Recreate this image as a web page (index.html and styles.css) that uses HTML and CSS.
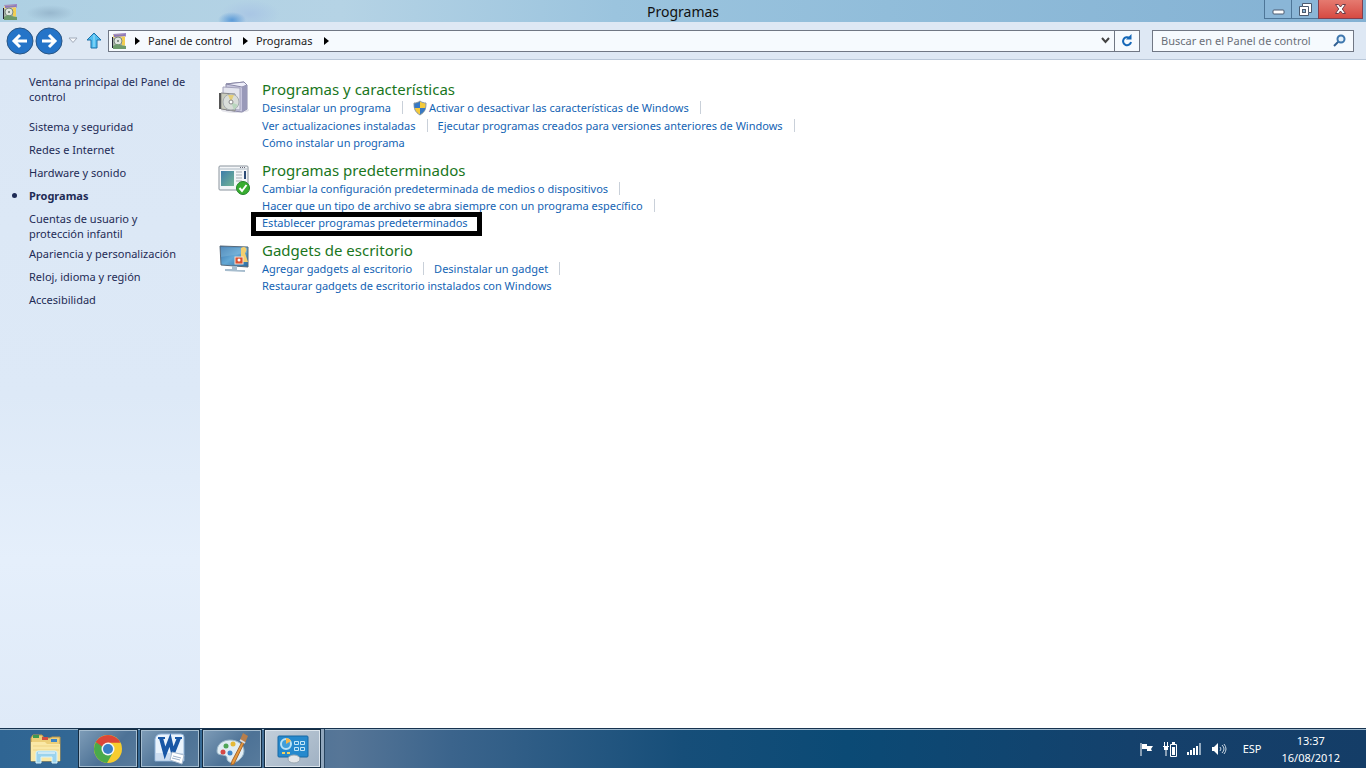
FILE: index.html
```html
<!DOCTYPE html>
<html lang="es">
<head>
  <meta charset="UTF-8" />
  <meta name="viewport" content="width=device-width, initial-scale=1.0" />
  <title>Programas</title>
  <link rel="stylesheet" href="styles.css">
</head>
<body>

  <!-- shared icon, used in the title bar and the address bar -->
  <svg class="defs" width="0" height="0" aria-hidden="true">
    <symbol id="icon-programs" viewBox="0 0 16 16">
      <path d="M1 4v11h1V4z" fill="#223"/>
      <path d="M2 1l13-1v3l-1 1v12l-3 0z" fill="#9b86c4"/>
      <path d="M2 2l12-1v12l-2 2H2z" fill="#e9d58a"/>
      <path d="M3 2l11-1v2L3 4z" fill="#8d79ba"/>
      <path d="M11 4h3v8h-3z" fill="#f2cf52"/>
      <path d="M2 5h9v10H2z" fill="#a8b5a6"/>
      <circle cx="7" cy="8" r="4" fill="#dfe5df" stroke="#7c8b81"/>
      <circle cx="7" cy="8" r="1" fill="#66736c"/>
      <path d="M2 13l4-2 3 1 6 1v3H2z" fill="#6d9a6c"/>
    </symbol>
  </svg>

  <header class="titlebar">
    <svg class="title-icon" width="16" height="16"><use href="#icon-programs"/></svg>
    <h1>Programas</h1>
    <div class="window-buttons">
      <button class="win-btn" aria-label="Minimizar">
        <svg width="13" height="12"><rect x="1" y="7" width="11" height="4" rx="1" fill="#fff" stroke="#4c5b70"/></svg>
      </button>
      <button class="win-btn" aria-label="Restaurar">
        <svg width="13" height="13"><path d="M3.500.5h9v9h-3v3h-9v-9h3z" fill="#fff" stroke="#4c5b70"/><path d="M3.500 3.500h6v6" fill="none" stroke="#4c5b70"/><rect x="3.500" y="6.500" width="3" height="3" fill="#8eb7d6" stroke="#4c5b70"/></svg>
      </button>
      <button class="win-btn close" aria-label="Cerrar">
        <svg width="13" height="12" viewBox="0 0 13 12"><path d="M1.500 1.500h3L6.500 4l2-2.500h3L8.300 6l3.200 4.500h-3L6.500 8l-2 2.500h-3L4.700 6z" fill="#fff" stroke="#6b3c48"/></svg>
      </button>
    </div>
  </header>

  <nav class="toolbar">
    <button class="round" aria-label="Atrás">
      <svg width="28" height="28"><circle cx="14" cy="14" r="13" fill="#2574c8" stroke="#285584"/><path d="M21 14H8M14 8l-6 6 6 6" fill="none" stroke="#fff" stroke-width="3"/></svg>
    </button>
    <button class="round" aria-label="Adelante">
      <svg width="28" height="28"><circle cx="14" cy="14" r="13" fill="#2574c8" stroke="#285584"/><path d="M7 14h13M14 8l6 6-6 6" fill="none" stroke="#fff" stroke-width="3"/></svg>
    </button>
    <button class="recent" aria-label="Páginas recientes">
      <svg width="10" height="7"><path d="M1 1h8L5 5.500z" fill="#f6f9fd" stroke="#a3acba"/></svg>
    </button>
    <button class="up" aria-label="Subir">
      <svg width="16" height="17"><path d="M8 1l7 7h-4v8H5V8H1z" fill="#4fbdf0" stroke="#1d71a9"/><path d="M8 3v12" stroke="#a5e2fb"/></svg>
    </button>
    <div class="address">
      <svg width="16" height="16"><use href="#icon-programs"/></svg>
      <svg class="crumb-arrow" width="5" height="8"><path d="M0 0l5 4-5 4z"/></svg>
      <a href="#">Panel de control</a>
      <svg class="crumb-arrow" width="5" height="8"><path d="M0 0l5 4-5 4z"/></svg>
      <a href="#">Programas</a>
      <svg class="crumb-arrow" width="5" height="8"><path d="M0 0l5 4-5 4z"/></svg>
      <button class="history" aria-label="Ubicaciones anteriores">
        <svg width="9" height="7"><path d="M1 1l3.500 4L8 1" fill="none" stroke="#444" stroke-width="2"/></svg>
      </button>
      <button class="refresh" aria-label="Actualizar">
        <svg width="12" height="13"><path d="M8.500 4A4 4 0 1 0 10 8" fill="none" stroke="#1668b8" stroke-width="2"/><path d="M10.500 0v5.500H5z" fill="#1668b8"/></svg>
      </button>
    </div>
    <div class="search">
      <input type="text" placeholder="Buscar en el Panel de control" aria-label="Buscar en el Panel de control">
      <svg width="13" height="13"><path d="M6 7l-5 5" stroke="#315f92" stroke-width="2"/><circle cx="8" cy="5" r="3.500" fill="#e3f0fa" stroke="#3e77ae" stroke-width="2"/></svg>
    </div>
  </nav>

  <div class="container">
    <aside class="sidebar">
      <a class="home" href="#">Ventana principal del Panel de control</a>
      <ul>
        <li><a href="#">Sistema y seguridad</a></li>
        <li><a href="#">Redes e Internet</a></li>
        <li><a href="#">Hardware y sonido</a></li>
        <li class="current"><a href="#">Programas</a></li>
        <li class="two-lines"><a href="#">Cuentas de usuario y protección infantil</a></li>
        <li><a href="#">Apariencia y personalización</a></li>
        <li><a href="#">Reloj, idioma y región</a></li>
        <li><a href="#">Accesibilidad</a></li>
      </ul>
    </aside>

    <main>
      <section class="category">
        <svg width="32" height="36" viewBox="0 0 32 36">
          <ellipse cx="17" cy="31" rx="14" ry="3" fill="#e4e4ea"/>
          <path d="M8 5l18-2 3 3v24l-5 3-16-2z" fill="#c7c6de" stroke="#8b8aa8"/>
          <path d="M8 5l16 3 5-2-3-3z" fill="#eeeef9" stroke="#8b8aa8"/>
          <path d="M24 8l5-2v24l-5 3z" fill="#9999b9"/>
          <path d="M5 8l17 1v22L5 30z" fill="#e4e5ee" stroke="#a3a2bb"/>
          <path d="M3 14l14 1v17L3 30z" fill="#c9cbbb" stroke="#888"/>
          <path d="M2 14v16" stroke="#555" stroke-width="2"/>
          <circle cx="13" cy="23" r="8" fill="#d9ddd9" stroke="#a6abb0"/>
          <path d="M13 23l-3-7 6 0z" fill="#e4ce7a"/>
          <path d="M13 23l7 3-4 5z" fill="#b9d6bd"/>
          <circle cx="13" cy="23" r="2" fill="#fff" stroke="#888"/>
        </svg>
        <div class="tasks">
          <h2><a href="#">Programas y características</a></h2>
          <div class="row">
            <a href="#">Desinstalar un programa</a>
            <a class="shielded" href="#">
              <svg width="14" height="16" viewBox="0 0 14 16"><path d="M7 1c2 1.500 4 2 6 2 0 6-1 9-6 12C2 12 1 9 1 3c2 0 4-.5 6-2z" fill="#f5ca3a" stroke="#8a98a8"/><path d="M7 1.500V8H1.500C1.200 6 1.200 5 1.200 3.400 3 3.300 5 2.800 7 1.500z" fill="#3778c4"/><path d="M7 8h5.500C12 11 10 13 7 14.500z" fill="#3778c4"/></svg>
              Activar o desactivar las características de Windows</a>
          </div>
          <div class="row">
            <a href="#">Ver actualizaciones instaladas</a>
            <a href="#">Ejecutar programas creados para versiones anteriores de Windows</a>
          </div>
          <div class="row last"><a href="#">Cómo instalar un programa</a></div>
        </div>
      </section>

      <section class="category">
        <svg width="32" height="36" viewBox="0 0 32 36">
          <rect x="1" y="6" width="29" height="24" rx="1" fill="#f4f6f8" stroke="#8a949d"/>
          <path d="M2 9h27" stroke="#aebac4"/>
          <path d="M22 7.500h6" stroke="#667" stroke-dasharray="1 1"/>
          <defs><linearGradient id="pane" x2="1" y2="1"><stop stop-color="#3c7caa"/><stop offset="1" stop-color="#74b694"/></linearGradient></defs>
          <rect x="3" y="11" width="13" height="15" fill="url(#pane)"/>
          <path d="M18 12h6M18 15h6M18 18h6M18 21h6" stroke="#a6abb1"/>
          <path d="M27 11v8" stroke="#2d4b76" stroke-width="2"/>
          <circle cx="25" cy="28" r="6.500" fill="#38ad2f" stroke="#23842a"/>
          <path d="M21.500 28l2.500 3 4.500-6" fill="none" stroke="#fff" stroke-width="2"/>
        </svg>
        <div class="tasks">
          <h2><a href="#">Programas predeterminados</a></h2>
          <div class="row"><a href="#">Cambiar la configuración predeterminada de medios o dispositivos</a></div>
          <div class="row"><a href="#">Hacer que un tipo de archivo se abra siempre con un programa específico</a></div>
          <div class="row last"><a class="marked" href="#">Establecer programas predeterminados</a></div>
        </div>
      </section>

      <section class="category">
        <svg width="32" height="36" viewBox="0 0 32 36">
          <defs><linearGradient id="screen" x2="1" y2="1"><stop stop-color="#2d69a5"/><stop offset=".5" stop-color="#65a9d5"/><stop offset="1" stop-color="#286a9f"/></linearGradient></defs>
          <path d="M2 6l28 1v20L3 25z" fill="url(#screen)" stroke="#596b7b"/>
          <path d="M3 7l26 1v5L3 17z" fill="#8dbddc" opacity=".4"/>
          <path d="M14 26h5v4h8v2l-20-1v-2h7z" fill="#a7bdce"/>
          <path d="M23 8c5-3 7 2 4 5l3 9h-7z" fill="#f4cf6e"/>
          <rect x="17" y="17" width="8" height="7" fill="#dc5130" stroke="#f8ddce"/>
          <circle cx="21" cy="20" r="1.500" fill="#fff"/>
        </svg>
        <div class="tasks">
          <h2><a href="#">Gadgets de escritorio</a></h2>
          <div class="row">
            <a href="#">Agregar gadgets al escritorio</a>
            <a href="#">Desinstalar un gadget</a>
          </div>
          <div class="row last"><a href="#">Restaurar gadgets de escritorio instalados con Windows</a></div>
        </div>
      </section>
    </main>
  </div>

  <footer class="taskbar">
    <div class="apps">
      <button class="app pinned" aria-label="Explorador">
        <svg width="34" height="32" viewBox="0 0 34 32">
          <path d="M2 5l2-3h9l2 3h6l2-1h8v24H2z" fill="#eccf79" stroke="#bb974a"/>
          <path d="M4 2h6v3H4z" fill="#3e9a50"/><path d="M13 4h6v3h-6z" fill="#d04d40"/><path d="M22 6h6v3h-6z" fill="#3b84c6"/>
          <path d="M2 9h14l2 2h13v17H2z" fill="#fae8a6"/>
          <path d="M4 13h26M4 17h26" stroke="#edd486"/>
          <path d="M7 30V20q0-2 2-2h17q2 0 2 2v10h-5v-6H12v6z" fill="#9bd3ed" stroke="#d8f4fc"/>
          <path d="M9 20h17" stroke="#fff"/>
        </svg>
      </button>
      <button class="app" aria-label="Google Chrome">
        <svg width="30" height="30" viewBox="0 0 30 30">
          <circle cx="15" cy="15" r="14" fill="#f7cc2e"/>
          <path d="M15 15L2.900 8A14 14 0 0 1 27.100 8.500H15z" fill="#dc4638"/>
          <path d="M2.900 8A14 14 0 0 0 14 29l6-10.500-5-3.500z" fill="#4aaa4b"/>
          <path d="M2.900 8A14 14 0 0 1 27.100 8.500H15a6.500 6.500 0 0 0-6 4z" fill="#dc4638"/>
          <circle cx="15" cy="15" r="6.500" fill="#f4f7f9"/><circle cx="15" cy="15" r="5" fill="#397fc5"/>
        </svg>
      </button>
      <button class="app" aria-label="Microsoft Word">
        <svg width="34" height="32" viewBox="0 0 34 32">
          <path d="M2 6q1-5 6-5h20q3 0 3 3v24H2z" fill="#eaf3fc" stroke="#8eb2d8"/>
          <path d="M3 20h27v7H3z" fill="#cdddf0"/>
          <path d="M8 5l4 15 5-13 3 13 6-15" fill="none" stroke="#1857a6" stroke-width="4"/>
          <path d="M5 5h7M22 5h7" stroke="#1857a6" stroke-width="2"/>
          <path d="M19 19l12 3-2 9-12-4z" fill="#fff" stroke="#a8bace"/><path d="M20 23l8 2M19 25l8 2" stroke="#9cb1ca"/>
        </svg>
      </button>
      <button class="app" aria-label="Paint">
        <svg width="34" height="34" viewBox="0 0 34 34">
          <path d="M2 19C2 10 12 6 21 9c9 3 10 12 5 17-4 5-10 6-13 3-2-2 0-4-2-5-4-2-9 0-9-5z" fill="#e1edf4" stroke="#9bb8c9"/>
          <circle cx="8" cy="20" r="2.500" fill="#d64845"/><circle cx="11" cy="14" r="2.500" fill="#50a658"/><circle cx="18" cy="12" r="2.500" fill="#e5b938"/><circle cx="15" cy="21" r="2.500" fill="#3d86ca"/>
          <path d="M27 10l2 1-10 21-3 1 1-4z" fill="#e99a3d" stroke="#a66930"/>
          <path d="M25 8l3-7 5 3-3 7z" fill="#b77e4c"/><path d="M25 8l5 3" stroke="#ddd" stroke-width="2"/>
        </svg>
      </button>
      <button class="app active" aria-label="Panel de control">
        <svg width="34" height="32" viewBox="0 0 34 32">
          <rect x="2" y="3" width="30" height="21" rx="1" fill="#2689cd" stroke="#1768a4"/>
          <circle cx="10" cy="11" r="5" fill="#419fda" stroke="#b8e2f6" stroke-width="2"/><path d="M10 11V5a6 6 0 0 1 5 3z" fill="#f5b64a"/>
          <path d="M18.500 8.500h4v3h-4zM24.500 8.500h4v3h-4zM18.500 14.500h4v3h-4zM24.500 14.500h4v3h-4z" fill="none" stroke="#c3e6f7"/>
          <path d="M6 20h3M11 20h3" stroke="#f5d35f" stroke-width="2"/>
          <ellipse cx="18" cy="26" rx="6" ry="4" fill="#e3e6e9" stroke="#9ba7b1"/>
        </svg>
      </button>
    </div>

    <div class="tray">
      <button aria-label="Centro de actividades">
        <svg width="16" height="14"><path d="M2 1v13" stroke="#fff" stroke-width="1"/><path d="M3 2h5v2h6l-2 3 1 2H8V7H3z" fill="#fff"/></svg>
      </button>
      <button aria-label="Batería">
        <svg width="16" height="16"><path d="M1.500 1v4M4.500 1v4M0 5.500h6M3 6v9" stroke="#fff" fill="none"/><path d="M1 5h4v4H1z" fill="#fff"/><path d="M7.500 3.500h6v12h-6z" fill="none" stroke="#fff"/><path d="M9 1h3v2H9zM9 6h3v8H9z" fill="#fff"/></svg>
      </button>
      <button aria-label="Red">
        <svg width="16" height="14"><path d="M0 10h2v3H0zM3 8h2v5H3zM6 6h2v7H6zM9 4h2v9H9z" fill="#fff"/><path d="M12 1h2v12h-2z" fill="#91a9bf"/></svg>
      </button>
      <button aria-label="Volumen">
        <svg width="16" height="14"><path d="M1 5h2l4-4v12L3 9H1z" fill="#fff"/><path d="M9 5q2 2 0 4M11 3q4 4 0 8M13 2q4 5 0 10" fill="none" stroke="#c8d6e3"/></svg>
      </button>
      <button class="lang">ESP</button>
      <button class="clock"><span>13:37</span><span>16/08/2012</span></button>
    </div>
  </footer>

</body>
</html>
```
FILE: styles.css
```css
* {
  margin: 0;
  padding: 0;
  box-sizing: border-box;
}

body {
  display: flex;
  flex-direction: column;
  min-height: 100vh;
  background-color: #fff;
  color: #1e2b55;
  font-family: 'Noto Sans', 'Open Sans', sans-serif;
  font-size: 11px;
  line-height: 15px;
}

a {
  color: inherit;
  text-decoration: none;
}

button {
  border: none;
  background: none;
  color: inherit;
  font: inherit;
  display: flex;
  align-items: center;
  justify-content: center;
}

svg {
  flex-shrink: 0;
}

.defs {
  position: absolute;
}

/* title bar */
.titlebar {
  display: grid;
  grid-template-columns: 1fr auto 1fr;
  height: 22px;
  background:
    radial-gradient(ellipse 24px 8px at 50px 13px, #98b8ce, transparent),
    radial-gradient(ellipse 14px 8px at 232px 20px, #5c9bd8, transparent),
    radial-gradient(ellipse 30px 14px at 250px 14px, #a9c6e4, transparent),
    linear-gradient(to right, #aed0e3, #b5d3e5 25%, #9bc4de 45%, #91bdda 65%, #83b1d3);
}

.title-icon {
  margin: 4px 2px;
}

h1 {
  color: #111;
  font-size: 14px;
  font-weight: 400;
  line-height: 24px;
}

.window-buttons {
  display: flex;
  justify-content: flex-end;
  padding-right: 3px;
}

.win-btn {
  width: 27px;
  height: 19px;
  border: 1px solid #4e7698;
  border-top: none;
  border-right: none;
  background-color: #8ab6d7;
}

.win-btn.close {
  width: 45px;
  border: 1px solid #833f4f;
  border-top: none;
  background: linear-gradient(#e57a70, #d64a42);
}

/* navigation bar */
.toolbar {
  display: flex;
  align-items: center;
  height: 38px;
  padding: 0 12px 0 5px;
  border-bottom: 1px solid #b9c7d8;
  background-color: #dee8f4;
}

.round {
  width: 29px;
}

.recent {
  width: 20px;
}

.up {
  width: 22px;
  margin-right: 3px;
}

.address,
.search {
  display: flex;
  align-items: center;
  height: 22px;
  border: 1px solid #707784;
  background-color: #f6fafe;
  color: #222;
}

.address {
  flex: 1;
  padding-left: 2px;
}

.address a {
  padding-left: 8px;
}

.crumb-arrow {
  margin-left: 8px;
}

.address a + .crumb-arrow {
  margin-left: 11px;
}

.history {
  margin-left: auto;
  width: 18px;
}

.refresh {
  width: 25px;
  height: 20px;
  border-left: 1px solid #707784;
}

.search {
  width: 202px;
  margin-left: 12px;
  padding: 0 7px 0 8px;
}

.search input {
  flex: 1;
  min-width: 0;
  border: none;
  outline: none;
  background: none;
  font: inherit;
}

.search input::placeholder {
  color: #6a6f78;
  opacity: 1;
}

/* page */
.container {
  flex: 1;
  display: flex;
}

.sidebar {
  width: 200px;
  padding: 14px 8px 0 29px;
  background: linear-gradient(#dbe7f5, #dde9f7 50%, #e5effb 75%, #dfeaf8);
}

.sidebar ul {
  list-style: none;
  display: flex;
  flex-direction: column;
  gap: 8px;
  margin-top: 15px;
}

.sidebar a {
  display: block;
}

.sidebar .current {
  position: relative;
  font-weight: 700;
}

.sidebar .current::before {
  content: "";
  position: absolute;
  left: -17px;
  top: 5px;
  width: 5px;
  height: 5px;
  border-radius: 50%;
  background-color: #1e2b55;
}

.sidebar .two-lines {
  width: 120px;
  margin-bottom: -3px;
}

main {
  flex: 1;
  display: flex;
  flex-direction: column;
  gap: 9px;
  padding: 19px 18px;
}

.category {
  display: flex;
  gap: 12px;
}

h2 {
  color: #1a761d;
  font-size: 15px;
  font-weight: 400;
  line-height: 20px;
}

.row {
  display: flex;
  align-items: flex-start;
  color: #1464b4;
  line-height: 17px;
}

.row a {
  display: flex;
  align-items: center;
}

.row a::after {
  content: "";
  width: 1px;
  height: 13px;
  margin: 0 10px 0 11px;
  background-color: #c9d0d9;
}

.row.last a::after {
  display: none;
}

.row .shielded {
  gap: 2px;
  margin-bottom: 1px;
}

.row .shielded::after {
  margin-left: 9px;
}

.row .marked {
  position: relative;
}

/* hand-drawn frame over the link */
.marked::before {
  content: "";
  position: absolute;
  inset: -2px -14px -5px -11px;
  border: 5px solid #000;
}

/* task bar */
.taskbar {
  display: flex;
  justify-content: space-between;
  height: 40px;
  border-top: 1px solid #17334f;
  box-shadow: inset 0 1px #9bb6cb;
  background: linear-gradient(to right, #2f6593, #386b96 15%, #577697 25%, #3b648c 33%, #164e79 50%, #0b4a75 62%, #15406b 85%, #143d67);
  color: #fff;
}

.apps {
  display: flex;
  gap: 2px;
  padding-left: 16px;
}

.app {
  width: 60px;
  border: 1px solid #142c42;
  box-shadow: inset 0 0 0 1px #a5bdd0;
  background: linear-gradient(135deg, #7f9db8, #4d7296 55%, #587b9c);
}

.app.pinned {
  border: none;
  box-shadow: none;
  background: none;
}

.app.active {
  width: 57px;
  background: linear-gradient(135deg, #c2cfdb, #a0b1c3);
  box-shadow: inset 0 0 0 1px #dce5ed, 3px 0 #91a7bd, 4px 0 #284561;
}

.tray {
  display: flex;
  align-items: center;
  gap: 8px;
  padding-right: 26px;
}

.lang {
  margin: 0 12px 0 8px;
}

.clock {
  flex-direction: column;
  line-height: 17px;
}
```
